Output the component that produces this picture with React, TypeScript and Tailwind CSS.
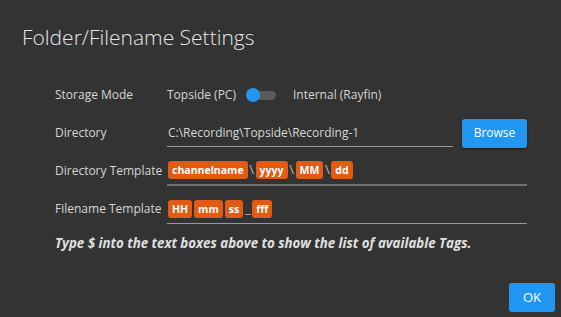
import React from "react";

function Chip({ label }: { label: string }) {
    return (
        <span className="px-[4px] h-[18px] leading-[18px] rounded-[3px] bg-[#e35a12] text-white text-[10.5px] font-bold">
            {label}
        </span>
    );
}

function Sep({ char, narrow }: { char: string; narrow?: boolean }) {
    return (
        <span className={`text-[#bbbbbb] text-[13px] text-center ${narrow ? "w-[5px]" : "w-[8px]"}`}>
            {char}
        </span>
    );
}

export default function App() {
    return (
        <div
            className="w-[561px] h-[317px] bg-[#333333] text-[#d6d6d6] flex flex-col overflow-hidden"
            style={{ fontFamily: '"Open Sans", "Noto Sans", sans-serif' }}
        >
            {/* Title */}
            <h1 className="pl-[22px] pt-[22px] text-[21px] font-light text-[#e6e6e6] leading-[30px]">
                Folder/Filename Settings
            </h1>

            {/* Form */}
            <div className="pl-[55px] pr-[34px] mt-[24px] text-[12px] whitespace-nowrap">
                <div className="flex items-center h-[38px]">
                    <div className="w-[112px]">Storage Mode</div>
                    <span>Topside (PC)</span>
                    <div className="relative w-[30px] h-[16px] ml-[10px] flex items-center">
                        <div className="ml-[8px] w-[22px] h-[9px] rounded-full bg-[#5a5a5a]" />
                        <div className="absolute left-0 top-[1px] w-[14px] h-[14px] rounded-full bg-[#2196f3]" />
                    </div>
                    <span className="ml-[17px]">Internal (Rayfin)</span>
                </div>

                <div className="flex items-center h-[38px]">
                    <div className="w-[112px]">Directory</div>
                    <div className="flex-1 h-[28px] flex items-center border-b border-[#9a9a9a] pl-[1px]">
                        C:\Recording\Topside\Recording-1
                    </div>
                    <button className="ml-[9px] w-[65px] h-[29px] rounded-[3px] bg-[#2196f3] text-white text-[12px] shadow-[0_1px_2px_rgba(0,0,0,0.5)]">
                        Browse
                    </button>
                </div>

                <div className="flex items-center h-[38px]">
                    <div className="w-[112px]">Directory Template</div>
                    <div className="flex-1 h-[30px] flex items-center border-b-2 border-[#707070] pl-[1px]">
                        <Chip label="channelname" />
                        <Sep char="\" />
                        <Chip label="yyyy" />
                        <Sep char="\" />
                        <Chip label="MM" />
                        <Sep char="\" />
                        <Chip label="dd" />
                    </div>
                </div>

                <div className="flex items-center h-[38px]">
                    <div className="w-[112px]">Filename Template</div>
                    <div className="flex-1 h-[30px] flex items-center gap-[2px] border-b border-[#9a9a9a] pl-[1px]">
                        <Chip label="HH" />
                        <Chip label="mm" />
                        <Chip label="ss" />
                        <Sep char="_" narrow />
                        <Chip label="fff" />
                    </div>
                </div>

                <p className="mt-[6px] text-[13.3px] font-bold italic text-[#e0e0e0]">
                    Type $ into the text boxes above to show the list of available Tags.
                </p>
            </div>

            <div className="mt-auto flex justify-end pr-[6px] pb-[5px]">
                <button className="w-[46px] h-[29px] rounded-[3px] bg-[#2196f3] text-white text-[13px]">
                    OK
                </button>
            </div>
        </div>
    );
}
